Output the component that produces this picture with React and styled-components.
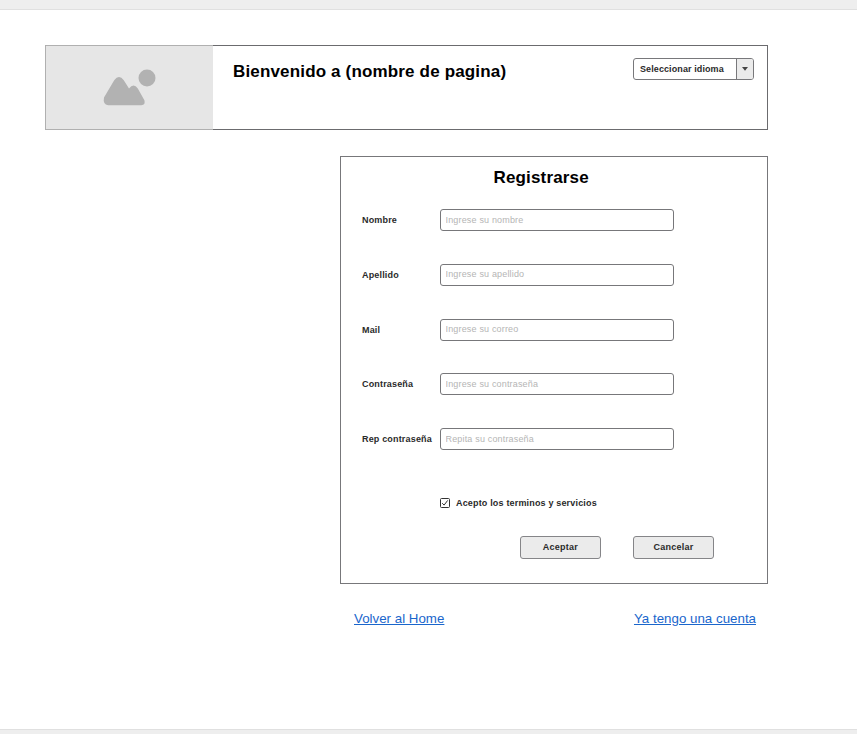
import React, { useState } from "react";
import styled, { createGlobalStyle } from "styled-components";

const GlobalStyle = createGlobalStyle`
  * { box-sizing: border-box; }
  body { margin: 0; background: #fff; font-family: "Liberation Sans", Arial, sans-serif; }
`;

const Page = styled.div`
  display: flex;
  flex-direction: column;
  height: 734px;
  overflow: hidden;
`;

const Strip = styled.div`
  flex: none;
  height: ${(p) => (p.$bottom ? 5 : 10)}px;
  background: #eee;
  border-${(p) => (p.$bottom ? "top" : "bottom")}: 1px solid #e0e0e0;
`;

const Content = styled.main`
  flex: 1;
  width: 723px;
  margin: 35px 0 0 45px;
`;

const Header = styled.header`
  display: flex;
  height: 85px;
  border: 1px solid #6b6b6e;
  border-left: none;
`;

const Logo = styled.div`
  display: flex;
  width: 168px;
  margin: -1px 0;
  background: #e6e6e6;
  border: 1px solid #b0b0b0;
  border-right: none;
  border-radius: 1px 0 0 1px;
`;

const Title = styled.h1`
  margin: ${(p) => p.$margin};
  font-size: 17px;
  line-height: 20px;
  letter-spacing: 0.16px;
  font-weight: 700;
  color: #000;
  white-space: nowrap;
`;

const Select = styled.button`
  display: flex;
  width: 121px;
  height: 22px;
  margin: 12px 13px 0 auto;
  padding: 0;
  background: #fff;
  border: 1px solid #78787b;
  border-radius: 3px;
  overflow: hidden;
  font: 700 9px/20px "Liberation Sans", Arial, sans-serif;
  letter-spacing: 0.1px;
  color: #2a2a2a;
  text-align: left;
`;

const SelectText = styled.span`
  flex: 1;
  padding-left: 6px;
  white-space: nowrap;
`;

const SelectArrow = styled.span`
  display: flex;
  align-items: center;
  justify-content: center;
  width: 17px;
  background: #ebebeb;
  border-left: 1px solid #78787b;
`;

const Panel = styled.form`
  width: 428px;
  height: 428px;
  margin: 26px 0 0 295px;
  padding: 11px 0 0 21px;
  border: 1px solid #77777a;
`;

const Fields = styled.div`
  display: grid;
  gap: 32.75px;
  margin-top: 21px;
`;

const Field = styled.label`
  display: grid;
  grid-template-columns: 78px 234px;
  height: 22px;
`;

const Label = styled.span`
  font-size: 9px;
  font-weight: 700;
  line-height: 22px;
  letter-spacing: 0.17px;
  color: #2a2a2a;
  white-space: nowrap;
`;

const Input = styled.input`
  width: 234px;
  height: 22px;
  padding: 0 4.5px 1px;
  border: 1px solid #77777a;
  border-radius: 3px;
  outline: none;
  background: #fff;
  font: 9px "Liberation Sans", Arial, sans-serif;
  letter-spacing: 0.17px;
  color: #222;
  &::placeholder { color: #b5b5b5; opacity: 1; }
`;

const Terms = styled.label`
  display: flex;
  align-items: center;
  gap: 6px;
  height: 22px;
  margin: 42px 0 0 78px;
`;

const CheckInput = styled.input`
  appearance: none;
  display: none;
`;

const Actions = styled.div`
  display: flex;
  gap: 32px;
  margin: 22px 0 0 158px;
`;

const Button = styled.button`
  width: 81px;
  height: 23px;
  padding: 0 0 2px;
  border: 1px solid #858588;
  border-radius: 3px;
  background: #ebebeb;
  font: 700 9px "Liberation Sans", Arial, sans-serif;
  letter-spacing: 0.25px;
  color: #2a2a2a;
`;

const Links = styled.nav`
  display: flex;
  justify-content: space-between;
  margin: 27px 12px 0 309px;
`;

const Link = styled.a`
  font-size: 13.33px;
  line-height: 16px;
  color: #1a66cc;
  text-decoration: underline;
`;

const fields = [
  ["Nombre", "Ingrese su nombre"],
  ["Apellido", "Ingrese su apellido"],
  ["Mail", "Ingrese su correo"],
  ["Contraseña", "Ingrese su contraseña"],
  ["Rep contraseña", "Repita su contraseña"],
];

function PictureIcon() {
  return (
    <svg width="167" height="83" fill="#b2b2b2">
      <circle cx="101" cy="32" r="8.5" />
      <path d="M58 51.5 68.2 34.2q4.8-6.6 9.6 0l5.2 8.3q4.6-6 8.8 0l6.6 11.8q1.4 4.8-3.2 5H62.2q-5.6-1-4.2-7.8Z" />
    </svg>
  );
}

function CheckBoxIcon({ checked }) {
  return (
    <svg width="10" height="10" viewBox="0 0 10 10" fill="none" stroke="#333">
      <rect x=".5" y=".5" width="9" height="9" rx="1" />
      {checked && <path d="m2.2 5.2 1.9 1.9 3.6-4.7" />}
    </svg>
  );
}

export default function App() {
  const [accepted, setAccepted] = useState(true);
  return (
    <>
      <GlobalStyle />
      <Page>
        <Strip />
        <Content>
          <Header>
            <Logo><PictureIcon /></Logo>
            <Title $margin="16px 0 0 20px">Bienvenido a (nombre de pagina)</Title>
            <Select type="button">
              <SelectText>Seleccionar idioma</SelectText>
              <SelectArrow>
                <svg width="6" height="4" fill="#444"><path d="M0 0h6L3 3.8Z" /></svg>
              </SelectArrow>
            </Select>
          </Header>
          <Panel onSubmit={(e) => e.preventDefault()}>
            <Title as="h2" $margin="0 0 0 131.5px">Registrarse</Title>
            <Fields>
              {fields.map(([label, hint]) => (
                <Field key={label}>
                  <Label>{label}</Label>
                  <Input placeholder={hint} />
                </Field>
              ))}
            </Fields>
            <Terms>
              <CheckInput type="checkbox" checked={accepted} onChange={(e) => setAccepted(e.target.checked)} />
              <CheckBoxIcon checked={accepted} />
              <Label>Acepto los terminos y servicios</Label>
            </Terms>
            <Actions>
              <Button type="submit">Aceptar</Button>
              <Button type="button">Cancelar</Button>
            </Actions>
          </Panel>
          <Links>
            <Link href="#home">Volver al Home</Link>
            <Link href="#login">Ya tengo una cuenta</Link>
          </Links>
        </Content>
        <Strip $bottom />
      </Page>
    </>
  );
}
